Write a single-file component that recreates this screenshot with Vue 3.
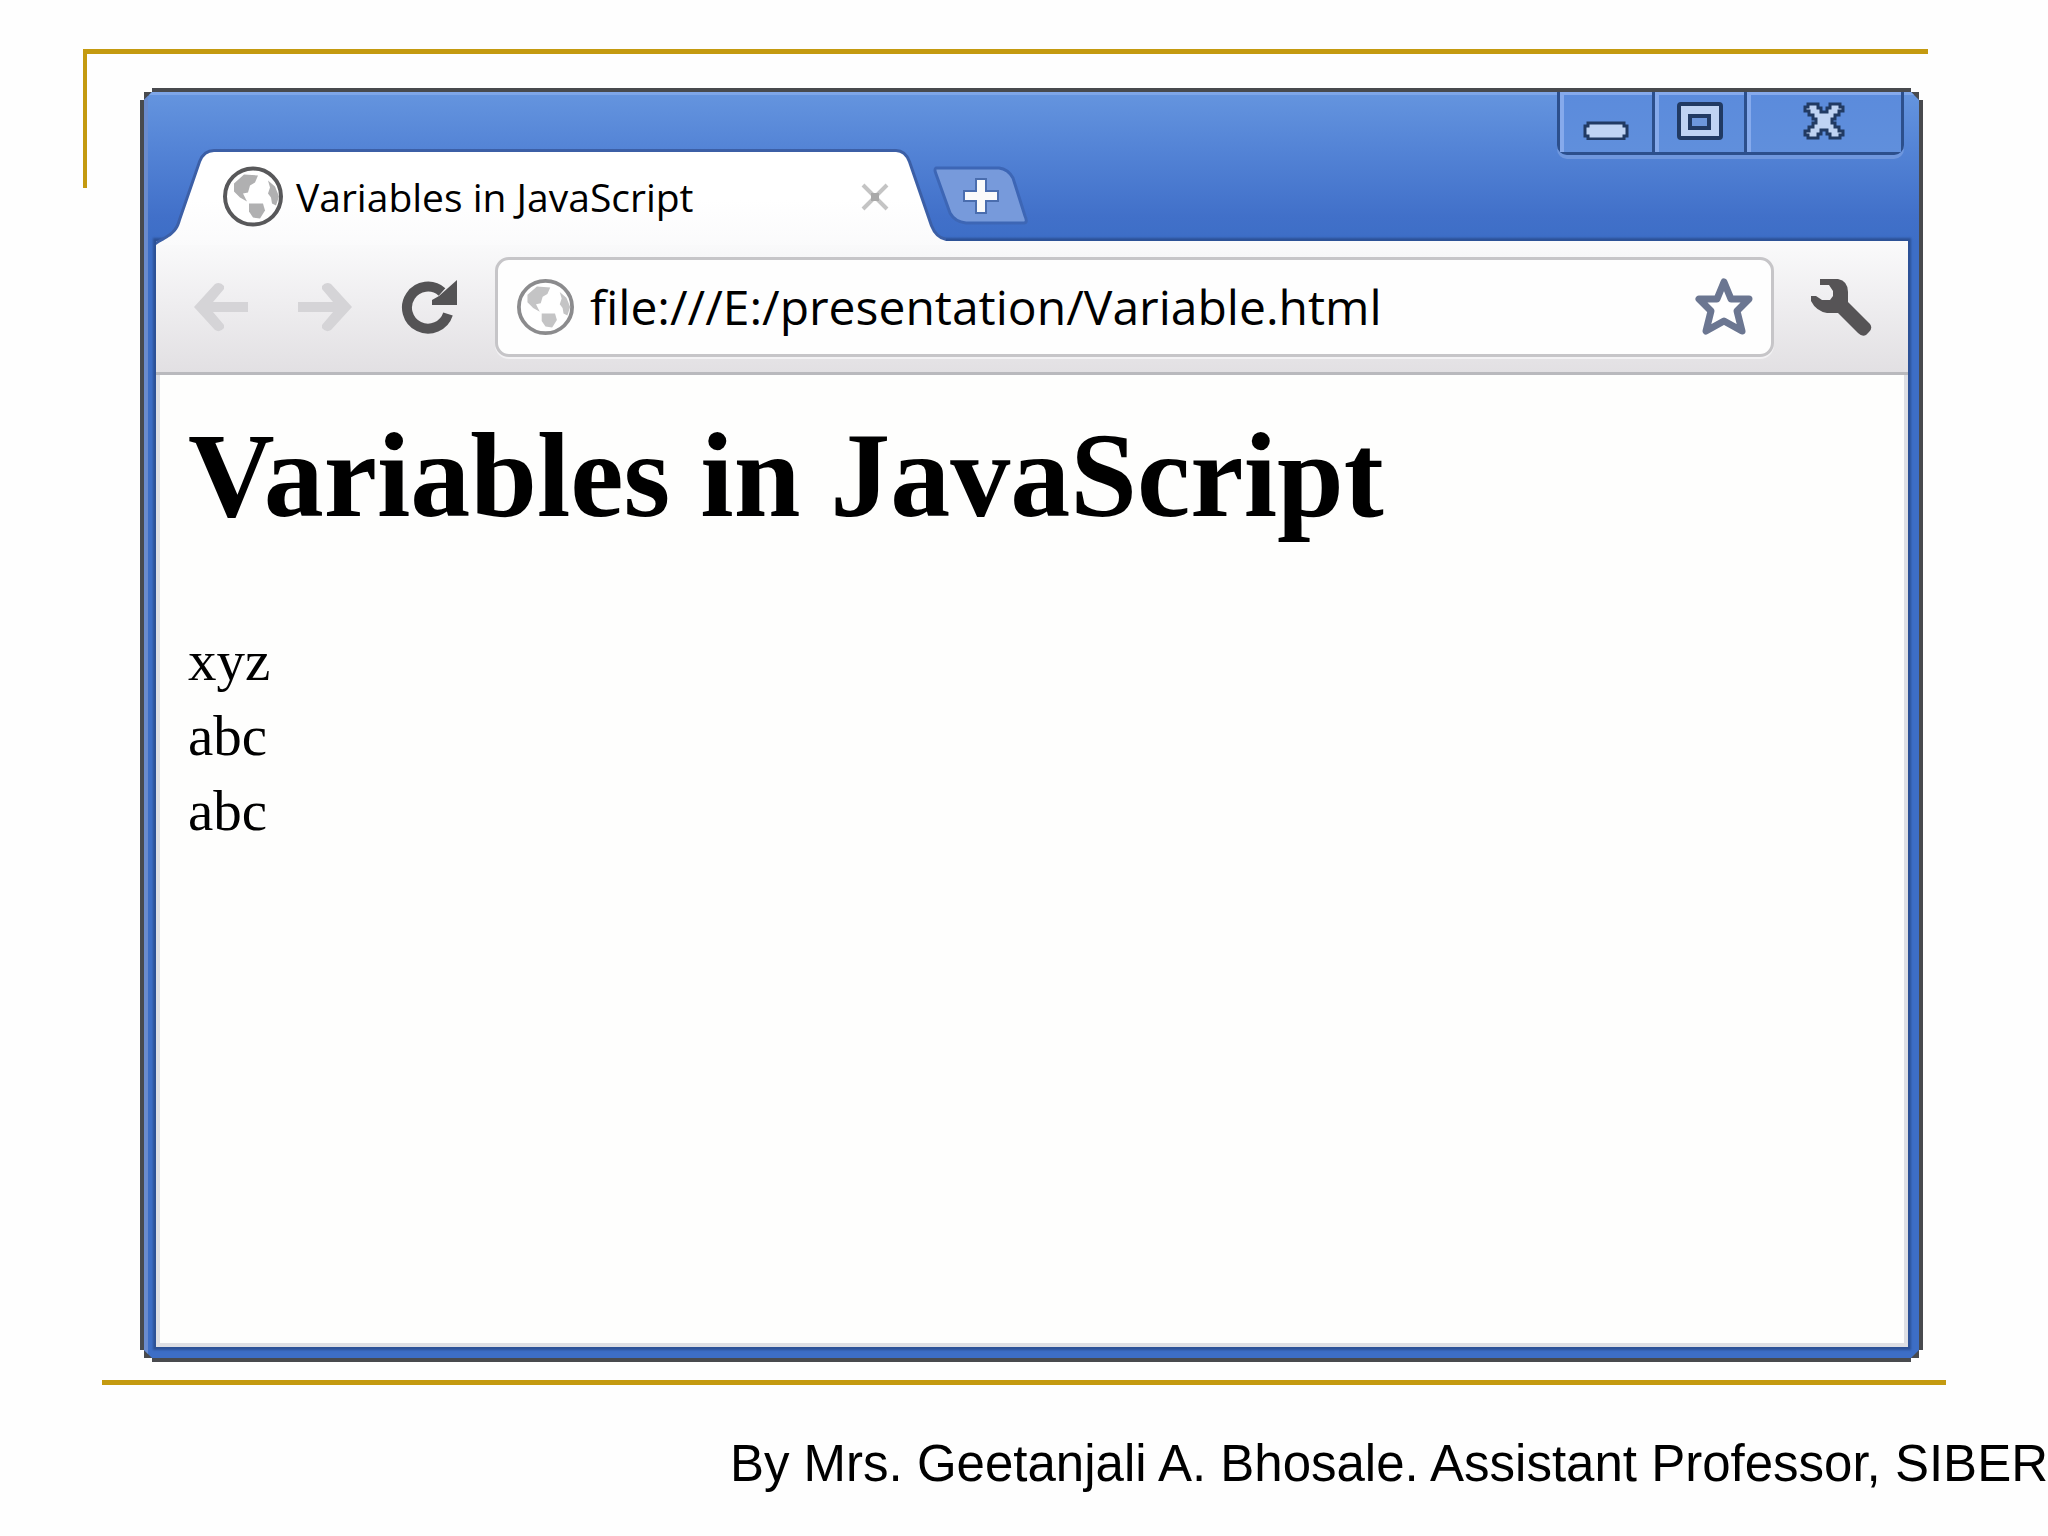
<template>
  <div class="slide">
    <div class="rule rule-top"></div>

    <section class="window" aria-label="Browser window">
      <div class="frame">
        <header class="tab-strip">
          <div class="tab">
            <svg class="tab-shape" viewBox="0 0 790 97" aria-hidden="true">
              <defs>
                <linearGradient id="tab-fill" x1="0" y1="0" x2="0" y2="1">
                  <stop offset="0.5" stop-color="#ffffff" />
                  <stop offset="1" stop-color="#fafafb" />
                </linearGradient>
              </defs>
              <path :d="tabPath" fill="none" stroke="#3c5fa6" stroke-width="6" />
              <path :d="tabPath" fill="url(#tab-fill)" />
            </svg>
            <div class="tab-content">
              <svg class="globe" viewBox="0 0 60 60" aria-hidden="true">
                <circle cx="30" cy="30" r="28" fill="#fff" stroke="#58585a" stroke-width="4" />
                <path v-for="d in landPaths" :key="d" :d="d" fill="#b0b0b1" />
              </svg>
              <span class="tab-title">{{ title }}</span>
              <button class="tab-close" type="button" aria-label="Close tab">
                <svg viewBox="0 0 28 28" width="28" height="28">
                  <path d="M2 2L26 26M26 2L2 26" stroke="#c4c4c4" stroke-width="4" />
                  <path d="M10 10h8v8h-8z" fill="#a9a9a9" />
                </svg>
              </button>
            </div>
          </div>

          <button class="new-tab" type="button" aria-label="New tab">
            <svg viewBox="0 0 96 60" width="96" height="60">
              <path
                d="M3 2H66Q75 3 80 12L92 50Q95 57 91 57H33Q22 56 17 47L3 8Q1 3 3 2Z"
                fill="#779adb"
                stroke="#3d66b5"
                stroke-width="3"
              />
              <path
                d="M44 14h8v12h12v8H52v12h-8V34H32v-8h12z"
                fill="#fafafa"
                stroke="#4a6dae"
                stroke-width="4"
                paint-order="stroke"
              />
            </svg>
          </button>

          <div class="controls">
            <button type="button" class="control" aria-label="Minimize">
              <svg viewBox="0 0 46 38" width="46" height="38">
                <path d="M5 21h36v3h3v10h-3v3H5v-3H2V24h3z" fill="#bfd3f3" stroke="#213a63" stroke-width="3" />
              </svg>
            </button>
            <button type="button" class="control" aria-label="Maximize">
              <svg viewBox="0 0 46 38" width="46" height="38">
                <rect x="2" y="2" width="42" height="34" rx="2" fill="#bfd3f3" stroke="#213a63" stroke-width="4" />
                <rect x="13" y="14" width="19" height="12" fill="#6d97dc" stroke="#213a63" stroke-width="4" />
              </svg>
            </button>
            <button type="button" class="control control-close" aria-label="Close">
              <svg viewBox="0 0 42 38" width="42" height="38">
                <path
                  d="M5 2h10v4h3v4h6V6h3V2h10v3h3v4h-4v4h-4v4h-3v4h3v4h4v4h4v4h-3v3H27v-4h-3v-4h-6v4h-3v4H5v-3H2v-4h4v-4h4v-4h3v-4h-3v-4H6V9H2V5h3z"
                  fill="#bfd3f3"
                  stroke="#213a63"
                  stroke-width="3"
                />
              </svg>
            </button>
          </div>
        </header>

        <div class="client">
          <nav class="toolbar">
            <button type="button" class="tool" aria-label="Back">
              <svg viewBox="0 0 56 50" width="56" height="50">
                <path :d="arrowPath" fill="#d5d4d7" />
              </svg>
            </button>
            <button type="button" class="tool tool-spaced" aria-label="Forward">
              <svg viewBox="0 0 56 50" width="56" height="50">
                <path :d="arrowPath" fill="#d5d4d7" transform="matrix(-1 0 0 1 56 0)" />
              </svg>
            </button>
            <button type="button" class="tool tool-spaced" aria-label="Reload">
              <svg viewBox="0 0 58 58" width="58" height="58">
                <path d="M47 36A21 21 0 1 1 41 14" fill="none" stroke="#545355" stroke-width="10" />
                <path d="M56 2V27H31V22L38 18Z" fill="#545355" />
              </svg>
            </button>

            <div class="omnibox">
              <svg class="globe globe-small" viewBox="0 0 60 60" preserveAspectRatio="none" aria-hidden="true">
                <circle cx="30" cy="30" r="28" fill="#fff" stroke="#8b8b8d" stroke-width="4" />
                <path v-for="d in landPaths" :key="d" :d="d" fill="#c4c4c5" />
              </svg>
              <input v-model="address" class="address" type="text" aria-label="Address" spellcheck="false" />
              <button type="button" class="tool" aria-label="Bookmark this page">
                <svg viewBox="0 0 64 64" width="64" height="64">
                  <path
                    d="M32 7L39 24H57L45 36L50 56L32 46L14 56L19 36L7 24H25Z"
                    fill="#fff"
                    stroke="#6b7691"
                    stroke-width="7"
                    stroke-linejoin="round"
                  />
                </svg>
              </button>
            </div>

            <button type="button" class="tool tool-menu" aria-label="Customize and control">
              <svg viewBox="0 0 62 60" width="62" height="60">
                <path
                  d="M10 2H28Q38 4 38 15V25L60 47Q63 51 59 55L56 58Q52 60 48 56L28 36H17Q6 34 1 24V19H6L12 23H20L23 19V14L19 8H10Z"
                  fill="#565456"
                />
              </svg>
            </button>
          </nav>

          <main class="page">
            <h1>{{ title }}</h1>
            <p v-for="(line, i) in lines" :key="i">{{ line }}</p>
          </main>
        </div>
      </div>
    </section>

    <div class="rule rule-bottom"></div>
    <footer>By Mrs. Geetanjali A. Bhosale. Assistant Professor, SIBER</footer>
  </div>
</template>

<script setup>
import { ref } from "vue";

const title = "Variables in JavaScript";
const address = ref("file:///E:/presentation/Variable.html");
const lines = ["xyz", "abc", "abc"];

const tabPath =
  "M0 97C10 90 21 88 25 72L45 14Q49 4 58 4H740Q748 4 752 14L774 78Q779 91 790 93V100H0Z";
const arrowPath = "M1 25L22 2Q27 -1 31 4V7L20 20H55V30H20L31 43V46Q27 51 22 48Z";

// Land masses of the globe icon
const landPaths = [
  "M11 17L21 8L35 9L32 16L27 19L25 26L20 27L24 35L17 31L11 25Z",
  "M45 14L52 20L56 30L53 39L49 37L48 31L45 27L47 21Z",
  "M26 37L40 37L42 44L37 52L30 51L26 45Z",
];
</script>

<style>
body {
  margin: 0;
  background: #fefefe;
}
</style>

<style scoped>
.slide {
  display: flex;
  flex-direction: column;
  box-sizing: border-box;
  min-height: 100vh;
  padding-top: 49px;
  overflow: hidden;
}

button {
  display: flex;
  align-items: center;
  justify-content: center;
  margin: 0;
  padding: 0;
  border: 0;
  background: none;
}

svg {
  display: block;
  flex-shrink: 0;
}

.rule {
  height: 5px;
  flex-shrink: 0;
  background: #c49a10;
}

.rule-top {
  position: relative;
  margin: 0 120px 0 83px;
}

/* Short vertical stroke hanging from the left end of the top rule */
.rule-top::before {
  content: "";
  position: absolute;
  left: 0;
  top: 0;
  width: 4px;
  height: 139px;
  background: #c49a10;
}

.rule-bottom {
  margin: 18px 102px 0;
}

/* Browser window */
.window {
  display: flex;
  flex: 1;
  margin: 34px 125px 0 140px;
  padding: 4px;
  background: #484a4e;
  clip-path: polygon(
    12px 0, calc(100% - 12px) 0, calc(100% - 12px) 4px, calc(100% - 4px) 4px, calc(100% - 4px) 12px, 100% 12px,
    100% calc(100% - 12px), calc(100% - 4px) calc(100% - 12px), calc(100% - 4px) calc(100% - 4px),
    calc(100% - 12px) calc(100% - 4px), calc(100% - 12px) 100%, 12px 100%, 12px calc(100% - 4px),
    4px calc(100% - 4px), 4px calc(100% - 12px), 0 calc(100% - 12px), 0 12px, 4px 12px, 4px 4px, 12px 4px
  );
}

.frame {
  display: flex;
  flex: 1;
  flex-direction: column;
  min-width: 0;
  padding: 0 11px 11px 12px;
  background: linear-gradient(#6595df, #5484d6 56px, #4170c9 125px, #3d6ec6 150px, #3d6ec6);
  box-shadow: inset 4px 0 0 #6a8bce, inset 0 3px 0 #7ea6e8;
  clip-path: polygon(
    8px 0, calc(100% - 8px) 0, 100% 8px, 100% calc(100% - 8px), calc(100% - 8px) 100%, 8px 100%,
    0 calc(100% - 8px), 0 8px
  );
}

.tab-strip {
  z-index: 1;
  display: flex;
  align-items: flex-end;
  height: 149px;
}

.tab {
  display: grid;
  width: 790px;
  height: 93px;
}

.tab-shape,
.tab-content {
  grid-area: 1 / 1;
}

.tab-shape {
  width: 790px;
  height: 97px;
}

.tab-content {
  z-index: 1;
  display: flex;
  align-items: center;
  padding: 0 57px 0 67px;
}

.globe {
  width: 60px;
  height: 61px;
}

.tab-title {
  flex: 1;
  margin-left: 13px;
  font: 39px/48px "Open Sans", sans-serif;
  white-space: nowrap;
}

.tab-close {
  width: 28px;
  height: 28px;
}

.new-tab {
  align-self: flex-end;
  margin: 0 0 15px -13px;
}

.controls {
  display: flex;
  align-self: flex-start;
  box-sizing: border-box;
  height: 63px;
  margin: 0 4px 0 auto;
  border: 3px solid #2c4f8c;
  border-top: 0;
  border-radius: 0 0 10px 10px;
  box-shadow: 0 4px 0 #6f97de;
  overflow: clip;
  overflow-clip-margin: 4px;
}

.control {
  align-items: flex-start;
  box-sizing: border-box;
  width: 92px;
  padding-top: 10px;
  background: linear-gradient(#5b8bdc, #608fdc);
  box-shadow: inset 4px 3px 0 #86aaec;
}

.control + .control {
  border-left: 3px solid #2c4f8c;
}

.control.control-close {
  width: 157px;
}

/* Toolbar and page, with the dark inner edge of the frame round them */
.client {
  display: flex;
  flex: 1;
  flex-direction: column;
  min-width: 0;
  box-shadow: 0 0 2px 3px #2c5196;
}

.toolbar {
  display: flex;
  align-items: center;
  height: 131px;
  padding: 0 36px 0 37px;
  border-bottom: 3px solid #b9b9bd;
  background: linear-gradient(#fafafb, #e2e0e3);
}

.tool-spaced {
  margin-left: 48px;
}

.omnibox {
  display: flex;
  flex: 1;
  align-items: center;
  box-sizing: border-box;
  height: 100px;
  min-width: 0;
  margin-left: 36px;
  padding: 0 15px 0 19px;
  border: 3px solid #c6c5c8;
  border-radius: 14px;
  background: #fefefe;
  box-shadow: 0 2px 0 #f3f2f4;
}

.globe-small {
  width: 57px;
  height: 56px;
}

.address {
  flex: 1;
  min-width: 0;
  margin-left: 16px;
  padding: 0;
  border: 0;
  outline: 0;
  background: none;
  color: #000;
  font: 48px/64px "Open Sans", sans-serif;
}

.tool-menu {
  margin-left: 36px;
}

.page {
  flex: 1;
  padding: 32px 28px;
  border: solid #dedfe4;
  border-width: 0 4px 4px;
  background: #fefefd;
  color: #000;
  font-family: "Liberation Serif", serif;
}

.page h1 {
  margin: 0 0 78px;
  font-size: 120px;
  line-height: 138px;
}

.page p {
  margin: 0;
  font-size: 57px;
  line-height: 75px;
}

footer {
  flex-shrink: 0;
  height: 102px;
  padding-top: 49px;
  color: #000;
  font: 51px/60px "Liberation Sans", sans-serif;
  text-align: right;
  white-space: nowrap;
}
</style>
